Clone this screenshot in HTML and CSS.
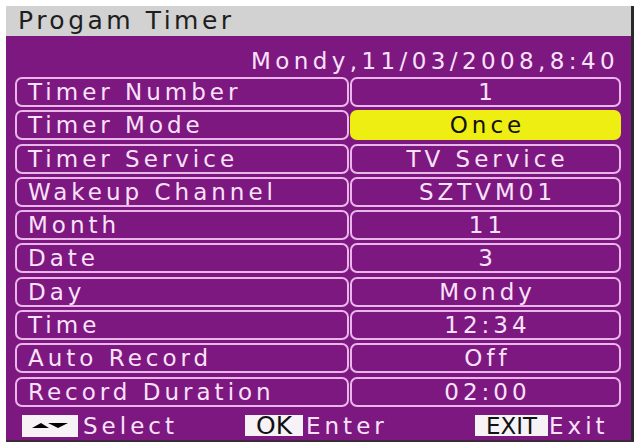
FILE: index.html
```html
<!DOCTYPE html>
<html>
<head>
<meta charset="utf-8">
<link rel="stylesheet" href="styles.css">
</head>
<body>
<div class="screen">
  <div class="title">Progam Timer</div>
  <div class="panel">
    <div class="date">Mondy,11/03/2008,8:40</div>
    <div class="rows">
      <div class="row"><div class="label">Timer Number</div><div class="value">1</div></div>
      <div class="row"><div class="label">Timer Mode</div><div class="value selected">Once</div></div>
      <div class="row"><div class="label">Timer Service</div><div class="value">TV Service</div></div>
      <div class="row"><div class="label">Wakeup Channel</div><div class="value">SZTVM01</div></div>
      <div class="row"><div class="label">Month</div><div class="value">11</div></div>
      <div class="row"><div class="label">Date</div><div class="value">3</div></div>
      <div class="row"><div class="label">Day</div><div class="value">Mondy</div></div>
      <div class="row"><div class="label">Time</div><div class="value">12:34</div></div>
      <div class="row"><div class="label">Auto Record</div><div class="value">Off</div></div>
      <div class="row"><div class="label">Record Duration</div><div class="value">02:00</div></div>
    </div>
    <div class="footer">
      <div class="hint">
        <span class="key key-arrows"><svg width="56" height="22" viewBox="0 0 56 22"><polygon points="10,13 19,8 27,13" fill="#000"/><polygon points="26,8 46,8 36,13" fill="#000"/></svg></span>
        <span class="hint-text">Select</span>
      </div>
      <div class="hint">
        <span class="key key-ok">OK</span>
        <span class="hint-text">Enter</span>
      </div>
      <div class="hint">
        <span class="key key-exit">EXIT</span>
        <span class="hint-text tight">Exit</span>
      </div>
    </div>
  </div>
</div>
</body>
</html>
```
FILE: styles.css
```css
html, body {
  margin: 0;
  padding: 0;
  background: #ffffff;
}
body {
  font-family: "DejaVu Sans", Verdana, sans-serif;
}
.screen {
  margin: 6px 0 0 6px;
  width: 625px;
  border-right: 3px solid #2a2a2a;
  border-bottom: 2px solid #3a2a3a;
}
.title {
  height: 30px;
  background: #d2d2d2;
  color: #1e1e1e;
  font-size: 25px;
  letter-spacing: 3.5px;
  line-height: 30px;
  padding-left: 12px;
}
.panel {
  background: #7d1880;
  padding: 10px 10px 0 9px;
  height: 404px;
  box-sizing: border-box;
  color: #fbe2fb;
  font-size: 23px;
  letter-spacing: 4px;
}
.date {
  height: 30px;
  line-height: 30px;
  text-align: right;
  padding-right: 2px;
  margin-bottom: 1px;
  letter-spacing: 4.4px;
}
.rows {
  display: flex;
  flex-direction: column;
  gap: 3.3px;
}
.row {
  display: grid;
  grid-template-columns: 334px 1fr;
  gap: 1px;
  height: 30px;
}
.label, .value {
  border: 2px solid #eab6ea;
  border-radius: 7px;
  box-sizing: border-box;
  height: 30px;
  line-height: 26px;
}
.label {
  padding-left: 11px;
  white-space: nowrap;
}
.value {
  text-align: center;
  padding-left: 4px;
}
.value.selected {
  background: #eeee12;
  border-color: #eeee12;
  color: #111;
}
.footer {
  display: grid;
  grid-template-columns: 223px 230px 1fr;
  padding-left: 7px;
  margin-top: 5px;
  height: 28px;
  align-items: center;
}
.hint {
  display: flex;
  align-items: center;
}
.key {
  background: #f6f2f6;
  color: #111;
  height: 21px;
  display: flex;
  align-items: center;
  justify-content: center;
  letter-spacing: 0;
}
.key-arrows {
  width: 56px;
  height: 22px;
}
.key-arrows svg {
  display: block;
}
.key-ok {
  width: 58px;
  font-size: 25px;
}
.key-exit {
  width: 73px;
  font-size: 23px;
  letter-spacing: 0;
}
.hint-text {
  margin-left: 5px;
}
.key-ok + .hint-text {
  margin-left: 3px;
}
.hint-text.tight {
  margin-left: 1px;
}
```
